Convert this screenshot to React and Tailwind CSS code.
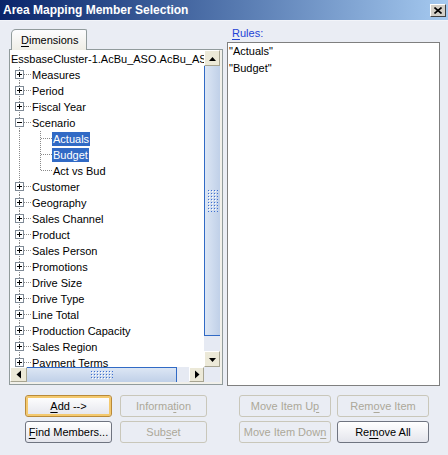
import React from 'react';

const FONT = "font-['Liberation_Sans',Arial,sans-serif]";

const topRows = [
  { label: 'Measures' },
  { label: 'Period' },
  { label: 'Fiscal Year' },
  { label: 'Scenario', open: true },
];

const scenarioKids = [
  { label: 'Actuals', selected: true },
  { label: 'Budget', selected: true },
  { label: 'Act vs Bud', last: true },
];

const moreRows = [
  'Customer',
  'Geography',
  'Sales Channel',
  'Product',
  'Sales Person',
  'Promotions',
  'Drive Size',
  'Drive Type',
  'Line Total',
  'Production Capacity',
  'Sales Region',
  'Payment Terms',
];

function Expander({ open }) {
  return (
    <svg width="22" height="16" shapeRendering="crispEdges" className="shrink-0">
      <line x1="9.5" y1="0" x2="9.5" y2="3" stroke="#8a8a8a" strokeDasharray="1 1" />
      <line x1="9.5" y1="13" x2="9.5" y2="16" stroke="#8a8a8a" strokeDasharray="1 1" />
      <rect x="5.5" y="3.5" width="8" height="8" fill="#fff" stroke="#7f8a96" />
      <line x1="7" y1="7.5" x2="12" y2="7.5" stroke="#000" />
      {!open && <line x1="9.5" y1="5" x2="9.5" y2="10" stroke="#000" />}
      <line x1="14" y1="7.5" x2="22" y2="7.5" stroke="#8a8a8a" strokeDasharray="1 1" />
    </svg>
  );
}

function ChildLines({ last }) {
  return (
    <svg width="42" height="16" shapeRendering="crispEdges" className="shrink-0">
      <line x1="9.5" y1="0" x2="9.5" y2="16" stroke="#8a8a8a" strokeDasharray="1 1" />
      <line x1="30.5" y1="0" x2="30.5" y2={last ? 8 : 16} stroke="#8a8a8a" strokeDasharray="1 1" />
      <line x1="31" y1="7.5" x2="42" y2="7.5" stroke="#8a8a8a" strokeDasharray="1 1" />
    </svg>
  );
}

function TreeRow({ label, open }) {
  return (
    <div className="flex h-[16px] items-center whitespace-nowrap">
      <Expander open={open} />
      <span className="leading-[16px]">{label}</span>
    </div>
  );
}

function ChildRow({ label, selected, last }) {
  return (
    <div className="flex h-[16px] items-center whitespace-nowrap">
      <ChildLines last={last} />
      <span
        className={
          selected
            ? 'h-[14px] bg-[#316ac5] px-[1px] leading-[14px] text-white'
            : 'px-[1px] leading-[16px]'
        }
      >
        {label}
      </span>
    </div>
  );
}

function Grip({ id, w, h }) {
  return (
    <svg width={w} height={h}>
      <defs>
        <pattern id={id} width="3" height="3" patternUnits="userSpaceOnUse">
          <rect x="0" y="0" width="1" height="1" fill="#3d6fd1" />
          <rect x="1" y="1" width="1" height="1" fill="#ffffff" />
        </pattern>
      </defs>
      <rect width={w} height={h} fill={`url(#${id})`} />
    </svg>
  );
}

function Arrow({ dir }) {
  const pts = {
    up: '4,10 11,10 7.5,6',
    down: '4,6 11,6 7.5,10',
    left: '10,3.5 10,11.5 5.5,7.5',
    right: '5,3.5 5,11.5 9.5,7.5',
  }[dir];
  return (
    <svg width="15" height="15" className="block">
      <polygon points={pts} fill="#000" />
    </svg>
  );
}

function ScrollButton({ dir, className }) {
  return (
    <div
      className={`flex items-center justify-center border border-b-[#a7a491] border-l-white border-r-[#a7a491] border-t-white bg-[#ece9d8] ${className}`}
    >
      <Arrow dir={dir} />
    </div>
  );
}

function Btn({ children, disabled, focused }) {
  let cls =
    'flex h-[22px] items-center justify-center rounded-[3px] border text-[11px] leading-none ';
  if (disabled) cls += 'border-[#c9c7ba] text-[#aca899]';
  else if (focused)
    cls +=
      'border-[#b98a3a] bg-gradient-to-b from-white to-[#e4e5ec] text-black shadow-[inset_0_0_0_2px_#f4c96e]';
  else cls += 'border-[#6f7480] bg-gradient-to-b from-white to-[#e4e5ec] text-black';
  return <div className={cls}>{children}</div>;
}

export default function App() {
  return (
    <div className={`flex h-[455px] w-[448px] flex-col overflow-hidden bg-[#eaedf4] text-[11px] text-black ${FONT}`}>
      {/* Title bar */}
      <div className="flex h-[20px] shrink-0 items-center bg-gradient-to-r from-[#0a246a] to-[#a6caf0] pl-[3px] pr-[2px]">
        <span className="text-[12px] font-bold text-white">Area Mapping Member Selection</span>
        <div className="ml-auto flex h-[13px] w-[16px] items-center justify-center border border-b-[#404040] border-l-white border-r-[#404040] border-t-white bg-[#d4d0c8]">
          <svg width="8" height="7">
            <path d="M0.5 0.5 L7.5 6.5 M7.5 0.5 L0.5 6.5" stroke="#000" strokeWidth="1.6" />
          </svg>
        </div>
      </div>
      <div className="h-[1px] bg-[#f2f4f9]" />

      {/* Main panels */}
      <div className="flex pl-[9px] pt-[5px]">
        {/* Left: Dimensions tab */}
        <div className="flex w-[214px] flex-col pt-[3px]">
          <div className="relative z-10 ml-[2px] flex h-[21px] w-[76px] items-center rounded-tl-[5px] rounded-tr-[2px] border border-b-0 border-[#919b9c] bg-gradient-to-b from-[#fcfcfe] to-[#efeee6] pl-[9px]">
            <span>
              <u className="underline-offset-2">D</u>imensions
            </span>
          </div>
          <div className="-mt-[1px] flex h-[336px] flex-col border border-[#919b9c] bg-[#f1f0ea] pb-[2px] pr-[2px]">
            <div className="flex h-[317px]">
              <div className="w-[194px] overflow-hidden bg-white pt-[1px]">
                <div className="h-[16px] whitespace-nowrap pl-[1px] leading-[16px]">
                  EssbaseCluster-1.AcBu_ASO.AcBu_ASO
                </div>
                {topRows.map((r) => (
                  <TreeRow key={r.label} {...r} />
                ))}
                {scenarioKids.map((r) => (
                  <ChildRow key={r.label} {...r} />
                ))}
                {moreRows.map((l) => (
                  <TreeRow key={l} label={l} />
                ))}
              </div>
              <div className="flex w-[16px] flex-col">
                <ScrollButton dir="up" className="h-[16px]" />
                <div className="flex h-[270px] items-center justify-center border-b border-l border-b-[#316ac5] border-l-[#316ac5] bg-gradient-to-r from-[#dce6f4] to-[#c0d0e8]">
                  <Grip id="vgrip" w={10} h={22} />
                </div>
                <div className="h-[15px] bg-[#e6eaf3]" />
                <ScrollButton dir="down" className="h-[16px]" />
              </div>
            </div>
            <div className="flex h-[15px]">
              <ScrollButton dir="left" className="w-[17px]" />
              <div className="flex w-[150px] items-center justify-center border-r border-t border-r-[#316ac5] border-t-[#316ac5] bg-gradient-to-b from-[#dce6f4] to-[#c0d0e8]">
                <Grip id="hgrip" w={22} h={9} />
              </div>
              <div className="w-[12px] bg-[#e6eaf3]" />
              <ScrollButton dir="right" className="w-[15px]" />
              <div className="w-[16px] bg-[#e6eaf3]" />
            </div>
          </div>
        </div>

        {/* Right: Rules */}
        <div className="ml-[4px] flex w-[213px] flex-col">
          <div className="h-[16px] pl-[5px] leading-[14px] text-[#2342d6]">
            <u className="underline-offset-2">R</u>ules:
          </div>
          <div className="h-[344px] border border-[#7f7f7f] bg-white pl-[1px]">
            <div className="h-[17px] leading-[17px]">"Actuals"</div>
            <div className="h-[18px] leading-[16px]">"Budget"</div>
          </div>
        </div>
      </div>

      {/* Buttons */}
      <div className="mt-[9px] flex">
        <div className="ml-[25px] grid grid-cols-[87px_87px] gap-x-[8px] gap-y-[4px]">
          <Btn focused>
            <span>
              <u className="underline-offset-2">A</u>dd --&gt;
            </span>
          </Btn>
          <Btn disabled>
            <span>
              Informa<u className="underline-offset-2">t</u>ion
            </span>
          </Btn>
          <Btn>
            <span>
              <u className="underline-offset-2">F</u>ind Members...
            </span>
          </Btn>
          <Btn disabled>
            <span>
              Sub<u className="underline-offset-2">s</u>et
            </span>
          </Btn>
        </div>
        <div className="ml-[32px] grid grid-cols-[92px_92px] gap-x-[6px] gap-y-[4px]">
          <Btn disabled>
            <span>
              Move Item U<u className="underline-offset-2">p</u>
            </span>
          </Btn>
          <Btn disabled>
            <span>
              Rem<u className="underline-offset-2">o</u>ve Item
            </span>
          </Btn>
          <Btn disabled>
            <span>
              Move Item Dow<u className="underline-offset-2">n</u>
            </span>
          </Btn>
          <Btn>
            <span>
              Re<u className="underline-offset-2">m</u>ove All
            </span>
          </Btn>
        </div>
      </div>
    </div>
  );
}
